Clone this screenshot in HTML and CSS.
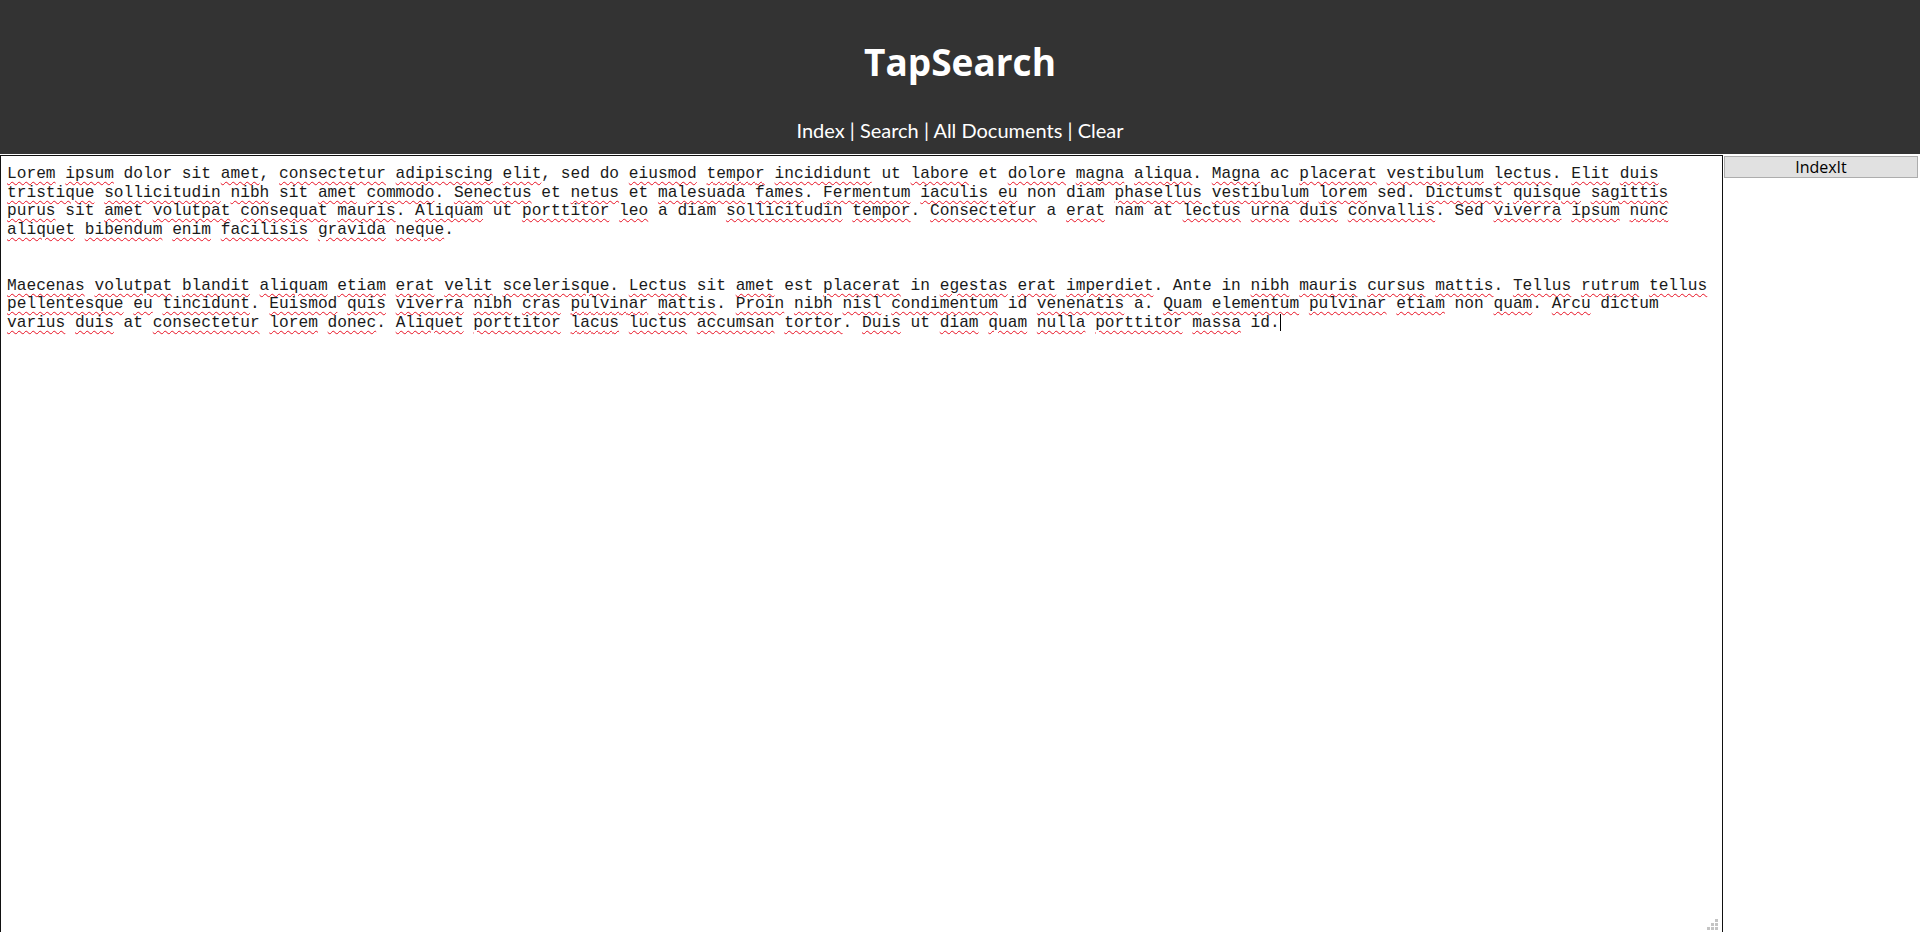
FILE: index.html
```html
<!DOCTYPE html>
<html lang="en">
<head>
<meta charset="utf-8">
<title>TapSearch</title>
<link rel="stylesheet" href="styles.css">
</head>
<body>
<header class="top">
  <h1 class="title">TapSearch</h1>
  <nav class="nav"><a href="#">Index</a> | <a href="#">Search</a> | <a href="#">All Documents</a> | <a href="#">Clear</a></nav>
</header>
<main class="workspace">
  <div class="editor"><div class="text"><u class="sp">Lorem</u> <u class="sp">ipsum</u> dolor sit <u class="sp">amet</u>, <u class="sp">consectetur</u> <u class="sp">adipiscing</u> <u class="sp">elit</u>, sed do <u class="sp">eiusmod</u> <u class="sp">tempor</u> <u class="sp">incididunt</u> ut <u class="sp">labore</u> et <u class="sp">dolore</u> <u class="sp">magna</u> <u class="sp">aliqua</u>. <u class="sp">Magna</u> ac <u class="sp">placerat</u> <u class="sp">vestibulum</u> <u class="sp">lectus</u>. <u class="sp">Elit</u> <u class="sp">duis</u> <u class="sp">tristique</u> <u class="sp">sollicitudin</u> <u class="sp">nibh</u> sit <u class="sp">amet</u> <u class="sp">commodo</u>. <u class="sp">Senectus</u> et <u class="sp">netus</u> et <u class="sp">malesuada</u> <u class="sp">fames</u>. <u class="sp">Fermentum</u> <u class="sp">iaculis</u> <u class="sp">eu</u> non diam <u class="sp">phasellus</u> <u class="sp">vestibulum</u> <u class="sp">lorem</u> sed. <u class="sp">Dictumst</u> <u class="sp">quisque</u> <u class="sp">sagittis</u> <u class="sp">purus</u> sit <u class="sp">amet</u> <u class="sp">volutpat</u> <u class="sp">consequat</u> <u class="sp">mauris</u>. <u class="sp">Aliquam</u> ut <u class="sp">porttitor</u> <u class="sp">leo</u> a diam <u class="sp">sollicitudin</u> <u class="sp">tempor</u>. <u class="sp">Consectetur</u> a <u class="sp">erat</u> nam at <u class="sp">lectus</u> <u class="sp">urna</u> <u class="sp">duis</u> <u class="sp">convallis</u>. Sed <u class="sp">viverra</u> <u class="sp">ipsum</u> <u class="sp">nunc</u> <u class="sp">aliquet</u> <u class="sp">bibendum</u> <u class="sp">enim</u> <u class="sp">facilisis</u> <u class="sp">gravida</u> <u class="sp">neque</u>.


<u class="sp">Maecenas</u> <u class="sp">volutpat</u> <u class="sp">blandit</u> <u class="sp">aliquam</u> <u class="sp">etiam</u> <u class="sp">erat</u> <u class="sp">velit</u> <u class="sp">scelerisque</u>. <u class="sp">Lectus</u> sit <u class="sp">amet</u> est <u class="sp">placerat</u> in <u class="sp">egestas</u> <u class="sp">erat</u> <u class="sp">imperdiet</u>. Ante in <u class="sp">nibh</u> <u class="sp">mauris</u> <u class="sp">cursus</u> <u class="sp">mattis</u>. <u class="sp">Tellus</u> <u class="sp">rutrum</u> <u class="sp">tellus</u> <u class="sp">pellentesque</u> <u class="sp">eu</u> <u class="sp">tincidunt</u>. <u class="sp">Euismod</u> <u class="sp">quis</u> <u class="sp">viverra</u> <u class="sp">nibh</u> <u class="sp">cras</u> <u class="sp">pulvinar</u> <u class="sp">mattis</u>. <u class="sp">Proin</u> <u class="sp">nibh</u> <u class="sp">nisl</u> <u class="sp">condimentum</u> id <u class="sp">venenatis</u> a. <u class="sp">Quam</u> <u class="sp">elementum</u> <u class="sp">pulvinar</u> <u class="sp">etiam</u> non <u class="sp">quam</u>. <u class="sp">Arcu</u> dictum <u class="sp">varius</u> <u class="sp">duis</u> at <u class="sp">consectetur</u> <u class="sp">lorem</u> <u class="sp">donec</u>. <u class="sp">Aliquet</u> <u class="sp">porttitor</u> <u class="sp">lacus</u> <u class="sp">luctus</u> <u class="sp">accumsan</u> <u class="sp">tortor</u>. <u class="sp">Duis</u> ut <u class="sp">diam</u> <u class="sp">quam</u> <u class="sp">nulla</u> <u class="sp">porttitor</u> <u class="sp">massa</u> id.<span class="caret"></span></div>
    <svg class="grip" width="12" height="12" viewBox="0 0 12 12"><rect x="8" y="0" width="3" height="3"/><rect x="4" y="4" width="3" height="3"/><rect x="8" y="4" width="3" height="3"/><rect x="0" y="8" width="3" height="3"/><rect x="4" y="8" width="3" height="3"/><rect x="8" y="8" width="3" height="3"/></svg>
  </div>
  <button class="index-btn" type="button">IndexIt</button>
</main>
</body>
</html>
```
FILE: styles.css
```css
html, body {
  margin: 0;
  padding: 0;
  overflow: hidden;
  background: #fff;
}
.top {
  background: #333333;
  color: #fff;
  text-align: center;
  padding: 39px 0 12px;
  font-family: "Open Sans", "Noto Sans", sans-serif;
}
.title {
  margin: 0;
  font-size: 37px;
  line-height: 46px;
  font-weight: 700;
}
.nav {
  margin-top: 33px;
  font-family: Lato, "Open Sans", sans-serif;
  font-size: 20px;
  line-height: 24px;
}
.nav a {
  color: #fff;
  text-decoration: none;
}
.workspace {
  display: flex;
  align-items: flex-start;
  gap: 1px;
  margin-top: 1px;
}
.editor {
  position: relative;
  box-sizing: border-box;
  width: 1723px;
  height: 778px;
  border: 1px solid #111;
  padding: 9px 6px 7px;
  flex: none;
}
.text {
  font-family: "Liberation Mono", "Courier New", monospace;
  font-size: 16.2px;
  line-height: 18.6px;
  color: #1a1a1a;
  white-space: pre-wrap;
}
.sp {
  text-decoration: underline wavy #e81123;
  text-decoration-thickness: 1px;
  text-underline-offset: 3px;
}
.caret {
  display: inline-block;
  width: 1px;
  height: 17px;
  background: #000;
  vertical-align: -4px;
}
.grip {
  position: absolute;
  right: 3px;
  bottom: 1px;
  fill: #c4c4c4;
}
.index-btn {
  flex: none;
  box-sizing: border-box;
  width: 194px;
  height: 22px;
  margin-top: 1px;
  padding: 0;
  background: #e1e1e1;
  border: 1px solid #adadad;
  border-radius: 0;
  font-family: "Open Sans", "Noto Sans", sans-serif;
  font-size: 16px;
  line-height: 20px;
  color: #000;
}
```
